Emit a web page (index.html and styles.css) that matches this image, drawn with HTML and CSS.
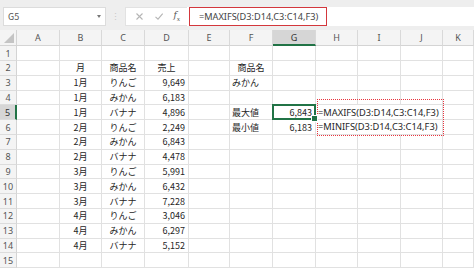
FILE: index.html
```html
<!DOCTYPE html>
<html lang="ja">
<head>
<meta charset="utf-8">
<link rel="stylesheet" href="styles.css">
</head>
<body>
<div class="app">
  <div class="fbar">
    <div class="namebox"><span class="ref">G5</span><span class="caret"></span></div>
    <div class="sep">⋮</div>
    <div class="btns">
      <svg class="ico" width="9" height="9" viewBox="0 0 9 9"><path d="M1.5 1.5 L7.5 7.5 M7.5 1.5 L1.5 7.5" stroke="#b5b5b5" stroke-width="1.1" fill="none"/></svg>
      <svg class="ico" width="10" height="9" viewBox="0 0 10 9"><path d="M1.5 4.8 L4 7.2 L8.7 1.6" stroke="#b5b5b5" stroke-width="1.1" fill="none"/></svg>
      <span class="fx">f<sub>x</sub></span>
    </div>
    <div class="input"><span class="hl">=MAXIFS(D3:D14,C3:C14,F3)</span></div>
  </div>
  <div class="sheet">
    <div class="corner"></div>
    <div class="ch">A</div><div class="ch">B</div><div class="ch">C</div><div class="ch">D</div><div class="ch">E</div><div class="ch">F</div><div class="ch sel">G</div><div class="ch">H</div><div class="ch">I</div><div class="ch">J</div><div class="ch">K</div>

    <div class="rh">1</div><div class="c"></div><div class="c"></div><div class="c"></div><div class="c"></div><div class="c"></div><div class="c"></div><div class="c"></div><div class="c"></div><div class="c"></div><div class="c"></div><div class="c"></div>

    <div class="rh">2</div><div class="c"></div><div class="c ctr">月</div><div class="c ctr">商品名</div><div class="c ctr">売上</div><div class="c"></div><div class="c ctr">商品名</div><div class="c"></div><div class="c"></div><div class="c"></div><div class="c"></div><div class="c"></div>

    <div class="rh">3</div><div class="c"></div><div class="c ctr">1月</div><div class="c ctr">りんご</div><div class="c num">9,649</div><div class="c"></div><div class="c">みかん</div><div class="c"></div><div class="c"></div><div class="c"></div><div class="c"></div><div class="c"></div>

    <div class="rh">4</div><div class="c"></div><div class="c ctr">1月</div><div class="c ctr">みかん</div><div class="c num">6,183</div><div class="c"></div><div class="c"></div><div class="c"></div><div class="c"></div><div class="c"></div><div class="c"></div><div class="c"></div>

    <div class="rh sel">5</div><div class="c"></div><div class="c ctr">1月</div><div class="c ctr">バナナ</div><div class="c num">4,896</div><div class="c"></div><div class="c">最大値</div><div class="c num active">6,843</div><div class="c span3 txt">=MAXIFS(D3:D14,C3:C14,F3)</div><div class="c"></div>

    <div class="rh">6</div><div class="c"></div><div class="c ctr">2月</div><div class="c ctr">りんご</div><div class="c num">2,249</div><div class="c"></div><div class="c">最小値</div><div class="c num">6,183</div><div class="c span3 txt">=MINIFS(D3:D14,C3:C14,F3)</div><div class="c"></div>

    <div class="rh">7</div><div class="c"></div><div class="c ctr">2月</div><div class="c ctr">みかん</div><div class="c num">6,843</div><div class="c"></div><div class="c"></div><div class="c"></div><div class="c"></div><div class="c"></div><div class="c"></div><div class="c"></div>

    <div class="rh">8</div><div class="c"></div><div class="c ctr">2月</div><div class="c ctr">バナナ</div><div class="c num">4,478</div><div class="c"></div><div class="c"></div><div class="c"></div><div class="c"></div><div class="c"></div><div class="c"></div><div class="c"></div>

    <div class="rh">9</div><div class="c"></div><div class="c ctr">3月</div><div class="c ctr">りんご</div><div class="c num">5,991</div><div class="c"></div><div class="c"></div><div class="c"></div><div class="c"></div><div class="c"></div><div class="c"></div><div class="c"></div>

    <div class="rh">10</div><div class="c"></div><div class="c ctr">3月</div><div class="c ctr">みかん</div><div class="c num">6,432</div><div class="c"></div><div class="c"></div><div class="c"></div><div class="c"></div><div class="c"></div><div class="c"></div><div class="c"></div>

    <div class="rh">11</div><div class="c"></div><div class="c ctr">3月</div><div class="c ctr">バナナ</div><div class="c num">7,228</div><div class="c"></div><div class="c"></div><div class="c"></div><div class="c"></div><div class="c"></div><div class="c"></div><div class="c"></div>

    <div class="rh">12</div><div class="c"></div><div class="c ctr">4月</div><div class="c ctr">りんご</div><div class="c num">3,046</div><div class="c"></div><div class="c"></div><div class="c"></div><div class="c"></div><div class="c"></div><div class="c"></div><div class="c"></div>

    <div class="rh">13</div><div class="c"></div><div class="c ctr">4月</div><div class="c ctr">みかん</div><div class="c num">6,297</div><div class="c"></div><div class="c"></div><div class="c"></div><div class="c"></div><div class="c"></div><div class="c"></div><div class="c"></div>

    <div class="rh">14</div><div class="c"></div><div class="c ctr">4月</div><div class="c ctr">バナナ</div><div class="c num">5,152</div><div class="c"></div><div class="c"></div><div class="c"></div><div class="c"></div><div class="c"></div><div class="c"></div><div class="c"></div>

    <div class="rh">15</div><div class="c"></div><div class="c"></div><div class="c"></div><div class="c"></div><div class="c"></div><div class="c"></div><div class="c"></div><div class="c"></div><div class="c"></div><div class="c"></div><div class="c"></div>

    <div class="annot"></div>
  </div>
</div>
</body>
</html>
```

FILE: styles.css
```css
* { box-sizing: border-box; }
html, body { margin: 0; padding: 0; }
body {
  width: 474px;
  height: 269px;
  overflow: hidden;
  background: #ffffff;
  font-family: "Noto Sans CJK JP", "Noto Sans", sans-serif;
  color: #262626;
}
.app { display: flex; flex-direction: column; }

/* formula bar */
.fbar {
  display: flex;
  align-items: stretch;
  height: 30px;
  padding: 7px 0 4px 3px;
  background: #eeeeee;
}
.namebox {
  width: 103px;
  display: flex;
  align-items: center;
  justify-content: space-between;
  background: #fff;
  border: 1px solid #dcdcdc;
  padding: 0 4px 0 4px;
  font-size: 9px;
  color: #555;
}
.caret {
  width: 0; height: 0;
  border-left: 2.5px solid transparent;
  border-right: 2.5px solid transparent;
  border-top: 3px solid #777;
}
.sep {
  width: 19px;
  display: flex;
  align-items: center;
  justify-content: center;
  color: #c8c8c8;
  font-size: 9px;
}
.btns {
  width: 62px;
  display: flex;
  align-items: center;
  justify-content: space-around;
  padding: 0 2px 0 4px;
  background: #fff;
  border: 1px solid #e2e2e2;
  border-right: none;
}
.ico { display: block; }
.fx {
  font-family: "DejaVu Serif", serif;
  font-style: italic;
  font-size: 9px;
  color: #555;
  line-height: 1;
}
.fx sub { font-size: 6px; }
.input {
  flex: 1;
  display: flex;
  background: #fff;
  padding-left: 2px;
}
.hl {
  width: 138px;
  border: 1.5px solid #d3373c;
  display: flex;
  align-items: center;
  padding-left: 9px;
  font-family: "Noto Sans", sans-serif;
  font-size: 9.2px;
  color: #444;
  white-space: nowrap;
}

/* sheet */
.sheet {
  position: relative;
  display: grid;
  grid-template-columns: 17px 43px 42px 43px 44px 41px 43px 43px 42px 43px 42px 1fr;
  grid-template-rows: 16px 15px repeat(14, 14.8px);
  font-size: 9px;
}
.corner {
  background: #f4f4f4;
  border-right: 1px solid #d4d4d4;
  border-bottom: 1px solid #d4d4d4;
  position: relative;
}
.corner::after {
  content: "";
  position: absolute;
  right: 2px; bottom: 2px;
  width: 0; height: 0;
  border-left: 10px solid transparent;
  border-bottom: 10px solid #c4c4c4;
}
.ch {
  background: #f4f4f4;
  border-right: 1px solid #d9d9d9;
  border-bottom: 1px solid #d4d4d4;
  display: flex;
  align-items: center;
  justify-content: center;
  color: #555;
  font-family: "Noto Sans", sans-serif;
  font-size: 9px;
}
.ch.sel {
  background: #d6d6d6;
  border-bottom: 2px solid #217346;
  color: #333;
}
.rh {
  background: #f4f4f4;
  border-right: 1px solid #d4d4d4;
  border-bottom: 1px solid #dcdcdc;
  display: flex;
  align-items: center;
  justify-content: center;
  color: #555;
  font-family: "Noto Sans", sans-serif;
  font-size: 9px;
}
.rh.sel {
  background: #d6d6d6;
  border-right: 2px solid #217346;
  color: #333;
}
.c {
  border-right: 1px solid #e1e1e1;
  border-bottom: 1px solid #e1e1e1;
  display: flex;
  align-items: center;
  padding: 0 2px;
  white-space: nowrap;
  line-height: 1;
}
.ctr { justify-content: center; }
.num { justify-content: flex-end; padding-right: 3px; }
.txt { font-family: "Noto Sans", sans-serif; font-size: 9.3px; }
.span3 { grid-column: span 3; }
.active { position: relative; }
.active::after {
  content: "";
  position: absolute;
  left: -1px; top: -1px; right: -1px; bottom: -1px;
  border: 2px solid #217346;
}
.active::before {
  content: "";
  position: absolute;
  right: -3px; bottom: -3px;
  width: 5px; height: 5px;
  background: #217346;
  border: 1px solid #fff;
  z-index: 2;
}
.annot {
  position: absolute;
  left: 317px;
  top: 69px;
  width: 127px;
  height: 37px;
  pointer-events: none;
  border: 1.5px dotted #e8343e;
}
```
